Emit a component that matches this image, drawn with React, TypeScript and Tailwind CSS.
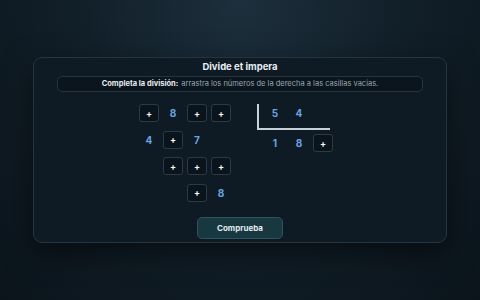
import React from 'react';

type Cell = { kind: 'box' } | { kind: 'num'; value: string } | { kind: 'empty' };

const box: Cell = { kind: 'box' };
const empty: Cell = { kind: 'empty' };
const num = (value: string): Cell => ({ kind: 'num', value });

const leftRows: Cell[][] = [
  [box, num('8'), box, box],
  [num('4'), box, num('7'), empty],
  [empty, box, box, box],
  [empty, empty, box, num('8')],
];

const Slot = ({ cell }: { cell: Cell }) => {
  if (cell.kind === 'box') {
    return (
      <div className="w-[20px] h-[18px] rounded-[3px] border border-[#2c3a45] bg-[#0a141c] flex items-center justify-center text-[9px] font-bold text-white leading-none">
        +
      </div>
    );
  }
  if (cell.kind === 'num') {
    return (
      <div className="w-[20px] h-[18px] flex items-center justify-center text-[10px] font-bold text-[#6aa3e2] leading-none">
        {cell.value}
      </div>
    );
  }
  return <div className="w-[20px] h-[18px]" />;
};

const App = () => {
  return (
    <div
      className="w-[480px] h-[300px] overflow-hidden bg-[radial-gradient(ellipse_at_50%_0%,#1d2f3c_0%,#12202a_45%,#0b141b_100%)] flex flex-col items-center pt-[57px]"
      style={{ fontFamily: 'Inter, "Noto Sans", sans-serif' }}
    >
      <div className="w-[414px] h-[186px] rounded-[9px] border border-[#25343f] bg-[#0f1b24] shadow-[0_10px_30px_rgba(0,0,0,0.5)] flex flex-col items-center">
        <h1 className="text-[9.5px] font-bold text-[#e8edf1] leading-[18px]">Divide et impera</h1>
        <div className="w-[366px] h-[16px] rounded-[5px] border border-[#25343f] bg-[#0b151d] flex items-center justify-center text-[7.5px] leading-none">
          <span className="font-bold text-[#e6ebef]">Completa la división:</span>
          <span className="ml-[3px] text-[#9aa6b0]">arrastra los números de la derecha a las casillas vacías.</span>
        </div>
        <div className="flex self-start mt-[12px] ml-[105px]">
          <div className="flex flex-col gap-[8.5px]">
            {leftRows.map((row, i) => (
              <div key={i} className="flex gap-[4px]">
                {row.map((cell, j) => (
                  <Slot key={j} cell={cell} />
                ))}
              </div>
            ))}
          </div>
          <div className="ml-[26px] flex flex-col">
            <div className="flex border-l-2 border-b-2 border-[#c9d1d8] w-[73px] h-[26px] pl-[6px] gap-[4px]">
              <Slot cell={num('5')} />
              <Slot cell={num('4')} />
            </div>
            <div className="flex pl-[8px] pt-[4px] gap-[4px]">
              <Slot cell={num('1')} />
              <Slot cell={num('8')} />
              <Slot cell={box} />
            </div>
          </div>
        </div>
        <button className="mt-[15px] w-[86px] h-[22px] rounded-[5px] border border-[#2d5560] bg-[#183840] text-[8px] font-bold text-[#e3ecef] leading-none">
          Comprueba
        </button>
      </div>
    </div>
  );
};

export default App;
